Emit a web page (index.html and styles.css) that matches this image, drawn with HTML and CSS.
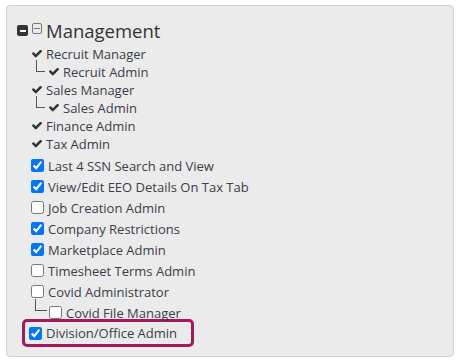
FILE: index.html
```html
<!DOCTYPE html>
<html lang="en">
<head>
    <meta charset="UTF-8">
    <title>Permissions</title>
    <link rel="stylesheet" href="styles.css">
</head>
<body>
    <div class="panel">
        <!-- Cabeçalho do grupo -->
        <div class="group-head">
            <span class="toggle toggle-solid"></span>
            <span class="toggle toggle-outline"></span>
            <span class="group-title">Management</span>
        </div>

        <ul class="perm-list">
            <li class="perm fixed"><svg class="tick" viewBox="128 420 1543 1130"><path d="M1671 566q0 40-28 68l-724 724-136 136q-28 28-68 28t-68-28l-136-136-362-362q-28-28-28-68t28-68l136-136q28-28 68-28t68 28l294 295 656-657q28-28 68-28t68 28l136 136q28 28 28 68z"/></svg>Recruit Manager</li>
            <li class="perm fixed child"><span class="branch"></span><svg class="tick" viewBox="128 420 1543 1130"><path d="M1671 566q0 40-28 68l-724 724-136 136q-28 28-68 28t-68-28l-136-136-362-362q-28-28-28-68t28-68l136-136q28-28 68-28t68 28l294 295 656-657q28-28 68-28t68 28l136 136q28 28 28 68z"/></svg>Recruit Admin</li>
            <li class="perm fixed"><svg class="tick" viewBox="128 420 1543 1130"><path d="M1671 566q0 40-28 68l-724 724-136 136q-28 28-68 28t-68-28l-136-136-362-362q-28-28-28-68t28-68l136-136q28-28 68-28t68 28l294 295 656-657q28-28 68-28t68 28l136 136q28 28 28 68z"/></svg>Sales Manager</li>
            <li class="perm fixed child"><span class="branch"></span><svg class="tick" viewBox="128 420 1543 1130"><path d="M1671 566q0 40-28 68l-724 724-136 136q-28 28-68 28t-68-28l-136-136-362-362q-28-28-28-68t28-68l136-136q28-28 68-28t68 28l294 295 656-657q28-28 68-28t68 28l136 136q28 28 28 68z"/></svg>Sales Admin</li>
            <li class="perm fixed"><svg class="tick" viewBox="128 420 1543 1130"><path d="M1671 566q0 40-28 68l-724 724-136 136q-28 28-68 28t-68-28l-136-136-362-362q-28-28-28-68t28-68l136-136q28-28 68-28t68 28l294 295 656-657q28-28 68-28t68 28l136 136q28 28 28 68z"/></svg>Finance Admin</li>
            <li class="perm fixed"><svg class="tick" viewBox="128 420 1543 1130"><path d="M1671 566q0 40-28 68l-724 724-136 136q-28 28-68 28t-68-28l-136-136-362-362q-28-28-28-68t28-68l136-136q28-28 68-28t68 28l294 295 656-657q28-28 68-28t68 28l136 136q28 28 28 68z"/></svg>Tax Admin</li>

            <li class="perm box"><input type="checkbox" checked>Last 4 SSN Search and View</li>
            <li class="perm box"><input type="checkbox" checked>View/Edit EEO Details On Tax Tab</li>
            <li class="perm box"><input type="checkbox">Job Creation Admin</li>
            <li class="perm box"><input type="checkbox" checked>Company Restrictions</li>
            <li class="perm box"><input type="checkbox" checked>Marketplace Admin</li>
            <li class="perm box"><input type="checkbox">Timesheet Terms Admin</li>
            <li class="perm box"><input type="checkbox">Covid Administrator</li>
            <li class="perm box child"><span class="branch"></span><input type="checkbox">Covid File Manager</li>
            <li class="perm box highlight"><input type="checkbox" checked>Division/Office Admin</li>
        </ul>
    </div>
</body>
</html>
```

FILE: styles.css
```css
body {
  margin: 0;
  background-color: #fff;
  font-family: "Open Sans", sans-serif;
  color: #3c3c4a;
}

/* Painel cinza */
.panel {
  margin: 5px 0 0 6px;
  width: 448px;
  height: 352px;
  box-sizing: border-box;
  border: 1px solid #d2d2d2;
  border-radius: 4px;
  background-color: #ebebeb;
  padding: 10px 10px 0 10px;
}

.group-head {
  display: flex;
  align-items: flex-start;
  height: 29px;
}

.toggle {
  box-sizing: border-box;
  display: flex;
  align-items: center;
  justify-content: center;
  border-radius: 2px;
}

.toggle::after {
  content: "";
  width: 6px;
  height: 2px;
}

.toggle-solid {
  width: 11px;
  height: 11px;
  margin-top: 9px;
  margin-right: 4px;
  background-color: #333;
}

.toggle-solid::after {
  background-color: #fff;
}

.toggle-outline {
  width: 10px;
  height: 11px;
  margin-top: 7px;
  margin-right: 4px;
  border: 1px solid #777;
}

.toggle-outline::after {
  height: 1px;
  background-color: #777;
}

.group-title {
  font-size: 18.5px;
  line-height: 29px;
  color: #333;
}

.perm-list {
  list-style: none;
  margin: 0;
  padding: 0 0 0 15px;
  font-size: 13px;
}

.perm {
  display: flex;
  align-items: center;
}

.perm.fixed {
  height: 18px;
}

.perm.box {
  height: 21px;
}

.perm.fixed + .perm.box {
  margin-top: 2px;
}

.tick {
  width: 10px;
  height: 8px;
  fill: #333;
  margin-right: 4px;
}

.perm input {
  width: 13px;
  height: 13px;
  margin: 0 4px 0 -1px;
}

/* Linha da árvore para sub-permissões */
.branch {
  box-sizing: border-box;
  align-self: flex-start;
  width: 9px;
  height: 12px;
  margin: -3px 4px 0 4px;
  border-left: 1px solid #555;
  border-bottom: 1px solid #555;
}

.perm.box.child .branch {
  width: 12px;
  margin: -3px 2px 0 3px;
}

.perm.box.child input {
  margin-left: 0;
}

/* Destaque em volta do item */
.perm.highlight {
  width: fit-content;
  margin: -4px 0 0 -10px;
  height: 28px;
  box-sizing: border-box;
  border: 3px solid #a3195b;
  border-radius: 5px;
  padding: 0 14px 0 5px;
}
```
